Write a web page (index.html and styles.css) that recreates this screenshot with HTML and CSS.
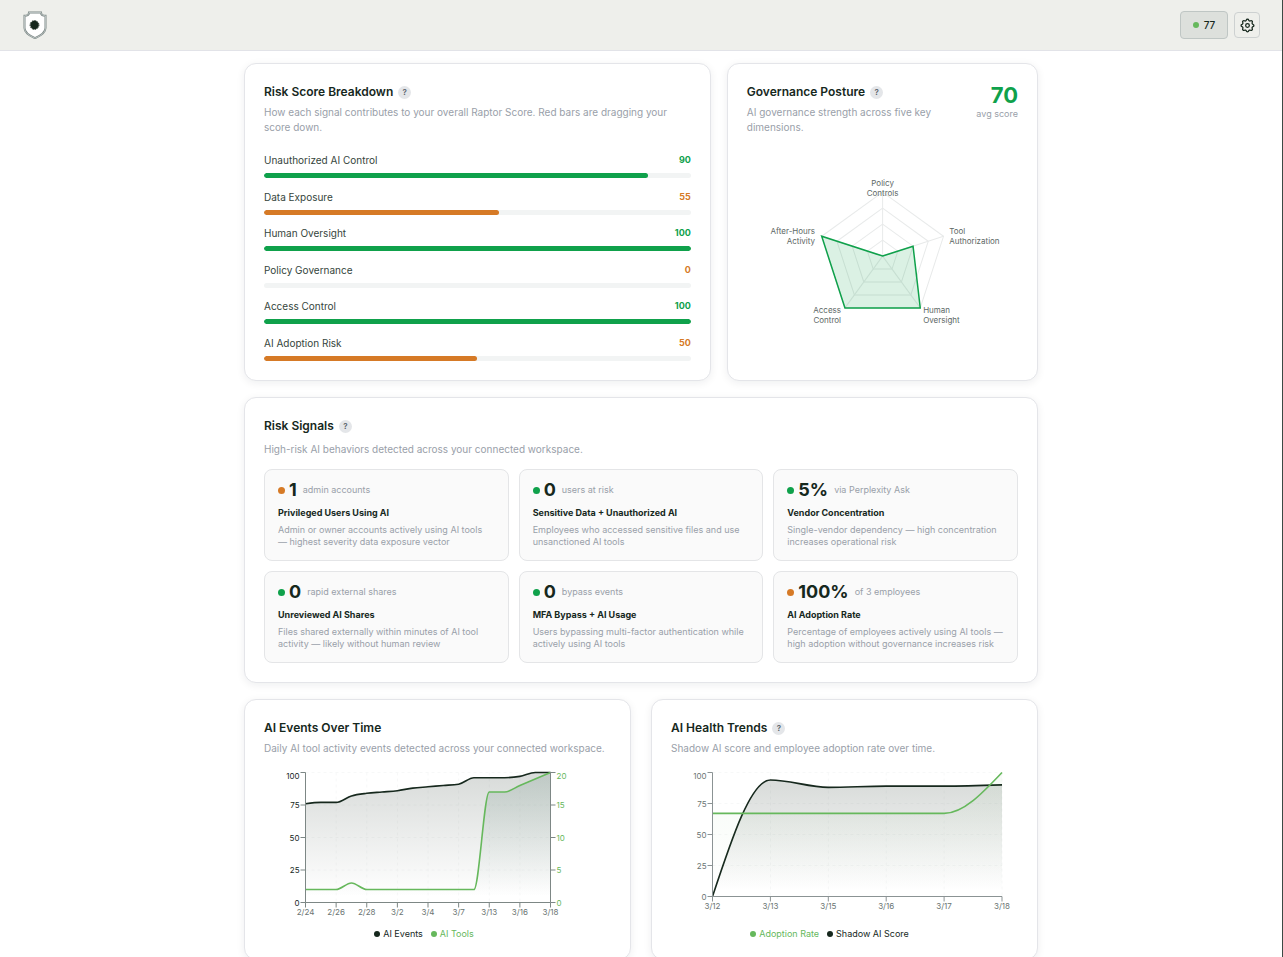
FILE: index.html
```html
<!DOCTYPE html>
<html lang="en">
<head>
    <meta charset="UTF-8">
    <meta name="viewport" content="width=device-width, initial-scale=1.0">
    <title>Raptor Score</title>
    <link rel="stylesheet" href="styles.css">
</head>
<body>

    <header class="topbar">
        <a href="#" class="logo" aria-label="Home">
            <svg width="24" height="28" viewBox="0 0 24 28">
                <path d="M6 1.5h12c0 2 1.800 3.300 4.500 3.300v12.200c0 4.500-4.500 7.500-10.500 10.200C6 24.500 1.500 21.500 1.500 17V4.800C4.200 4.800 6 3.500 6 1.500z" fill="#fff" stroke="#7f8a87" stroke-width="2"/>
                <path d="M6 1.500h12c0 2 1.800 3.300 4.500 3.300v12.200c0 4.500-4.500 7.500-10.500 10.200C6 24.500 1.500 21.500 1.500 17V4.800C4.200 4.800 6 3.500 6 1.500z" fill="none" stroke="#c3cbcb" stroke-width=".8"/>
                <circle cx="11.500" cy="14" r="4.200" fill="#16281d"/>
                <circle cx="11.500" cy="14" r="4.400" fill="none" stroke="#16281d" stroke-width="1" stroke-dasharray="1.500 1"/>
            </svg>
        </a>
        <div class="actions">
            <button class="score-btn"><span class="dot light"></span>77</button>
            <button class="gear-btn" aria-label="Settings">
                <svg width="17" height="17" viewBox="0 0 24 24" fill="none" stroke="#16281d" stroke-width="1.800" stroke-linejoin="round">
                    <path d="M10.300 4.300c.4-1.700 3-1.700 3.400 0a1.700 1.700 0 0 0 2.600 1.100c1.500-1 3.300.8 2.400 2.400a1.700 1.700 0 0 0 1 2.500c1.800.5 1.800 3 0 3.400a1.700 1.700 0 0 0-1 2.600c.9 1.500-.9 3.300-2.400 2.400a1.700 1.700 0 0 0-2.600 1c-.4 1.800-3 1.800-3.400 0a1.700 1.700 0 0 0-2.600-1c-1.500.9-3.300-.9-2.400-2.400a1.700 1.700 0 0 0-1-2.600c-1.800-.4-1.800-3 0-3.400a1.700 1.700 0 0 0 1-2.500c-.9-1.600.9-3.400 2.400-2.400a1.700 1.700 0 0 0 2.600-1.100z"/>
                    <circle cx="12" cy="12" r="2.600"/>
                </svg>
            </button>
        </div>
    </header>

    <main class="content">

        <div class="row top-row">
            <section class="card breakdown">
                <h2>Risk Score Breakdown <button class="help">?</button></h2>
                <p class="sub">How each signal contributes to your overall Raptor Score. Red bars are dragging your score down.</p>
                <ul class="bars">
                    <li><div class="bar-label"><span>Unauthorized AI Control</span><b class="good">90</b></div><div class="track"><div class="fill good-bg" style="width: 90%"></div></div></li>
                    <li><div class="bar-label"><span>Data Exposure</span><b class="warn">55</b></div><div class="track"><div class="fill warn-bg" style="width: 55%"></div></div></li>
                    <li><div class="bar-label"><span>Human Oversight</span><b class="good">100</b></div><div class="track"><div class="fill good-bg" style="width: 100%"></div></div></li>
                    <li><div class="bar-label"><span>Policy Governance</span><b class="warn">0</b></div><div class="track"><div class="fill warn-bg" style="width: 0%"></div></div></li>
                    <li><div class="bar-label"><span>Access Control</span><b class="good">100</b></div><div class="track"><div class="fill good-bg" style="width: 100%"></div></div></li>
                    <li><div class="bar-label"><span>AI Adoption Risk</span><b class="warn">50</b></div><div class="track"><div class="fill warn-bg" style="width: 50%"></div></div></li>
                </ul>
            </section>

            <section class="card">
                <div class="card-head">
                    <div>
                        <h2>Governance Posture <button class="help">?</button></h2>
                        <p class="sub">AI governance strength across five key dimensions.</p>
                    </div>
                    <div class="avg">
                        <strong>70</strong>
                        <span>avg score</span>
                    </div>
                </div>
                <svg class="chart" id="radar" viewBox="0 0 271 216"></svg>
            </section>
        </div>

        <section class="card signals">
            <h2>Risk Signals <button class="help">?</button></h2>
            <p class="sub">High-risk AI behaviors detected across your connected workspace.</p>
            <div class="tiles">
                <article class="tile">
                    <div class="stat"><span class="dot warn-bg"></span><strong>1</strong><span>admin accounts</span></div>
                    <h3>Privileged Users Using AI</h3>
                    <p>Admin or owner accounts actively using AI tools —&nbsp;highest severity data exposure vector</p>
                </article>
                <article class="tile">
                    <div class="stat"><span class="dot good-bg"></span><strong>0</strong><span>users at risk</span></div>
                    <h3>Sensitive Data + Unauthorized AI</h3>
                    <p>Employees who accessed sensitive files and use unsanctioned AI tools</p>
                </article>
                <article class="tile">
                    <div class="stat"><span class="dot good-bg"></span><strong>5%</strong><span>via Perplexity Ask</span></div>
                    <h3>Vendor Concentration</h3>
                    <p>Single-vendor dependency — high concentration increases operational risk</p>
                </article>
                <article class="tile">
                    <div class="stat"><span class="dot good-bg"></span><strong>0</strong><span>rapid external shares</span></div>
                    <h3>Unreviewed AI Shares</h3>
                    <p>Files shared externally within minutes of AI tool activity — likely without human review</p>
                </article>
                <article class="tile">
                    <div class="stat"><span class="dot good-bg"></span><strong>0</strong><span>bypass events</span></div>
                    <h3>MFA Bypass + AI Usage</h3>
                    <p>Users bypassing multi-factor authentication while actively using AI tools</p>
                </article>
                <article class="tile">
                    <div class="stat"><span class="dot warn-bg"></span><strong>100%</strong><span>of 3 employees</span></div>
                    <h3>AI Adoption Rate</h3>
                    <p>Percentage of employees actively using AI tools — high adoption without governance increases risk</p>
                </article>
            </div>
        </section>

        <div class="row chart-row">
            <section class="card">
                <h2>AI Events Over Time</h2>
                <p class="sub">Daily AI tool activity events detected across your connected workspace.</p>
                <svg class="chart" id="events" viewBox="0 0 347 160"></svg>
                <div class="legend events-legend">
                    <span><i class="dot dark"></i>AI Events</span>
                    <span class="green"><i class="dot light"></i>AI Tools</span>
                </div>
            </section>

            <section class="card">
                <h2>AI Health Trends <button class="help">?</button></h2>
                <p class="sub">Shadow AI score and employee adoption rate over time.</p>
                <svg class="chart" id="trends" viewBox="0 0 347 160"></svg>
                <div class="legend trends-legend">
                    <span class="green"><i class="dot light"></i>Adoption Rate</span>
                    <span><i class="dot dark"></i>Shadow AI Score</span>
                </div>
            </section>
        </div>

    </main>

    <script src="charts.js"></script>
</body>
</html>
```
FILE: styles.css
```css
* { box-sizing: border-box; margin: 0; padding: 0; }

body {
    font-family: Inter, "Liberation Sans", sans-serif;
    font-size: 10px;
    color: #16281d;
    background: #fff;
    min-height: 100vh;
    border-right: 1px solid #3c4944;
}

button { font-family: inherit; color: inherit; cursor: pointer; }
ul { list-style: none; }

/* top bar */
.topbar {
    display: flex;
    align-items: center;
    justify-content: space-between;
    height: 51px;
    padding: 0 22px 0 23px;
    background: #eeefeb;
    border-bottom: 1px solid #e2e3e8;
}

.logo svg { display: block; }
.actions { display: flex; align-items: center; gap: 6px; }

.score-btn {
    display: flex;
    align-items: center;
    justify-content: center;
    gap: 5px;
    width: 48px;
    height: 28px;
    background: #dde0dc;
    border: 1px solid #bfc6c4;
    border-radius: 4px;
    font-size: 10px;
    font-weight: 500;
}

.gear-btn {
    display: flex;
    align-items: center;
    justify-content: center;
    width: 26px;
    height: 26px;
    background: #eeefeb;
    border: 1px solid #cdd1d1;
    border-radius: 4px;
}

.dot { display: inline-block; flex: none; width: 6px; height: 6px; border-radius: 50%; }
.light { background: #66b85c; }
.dark { background: #16281d; }
.green { color: #66b85c; }

.good { color: #0fa14b; }
.warn { color: #d67a26; }
.good-bg { background: #0fa14b; }
.warn-bg { background: #d67a26; }

/* cards */
.content {
    display: flex;
    flex-direction: column;
    gap: 16px;
    max-width: 794px;
    margin: 0 auto;
    padding: 12px 0;
}

.row { display: grid; gap: 16px; }
.top-row { grid-template-columns: 3fr 2fr; }
.chart-row { grid-template-columns: 1fr 1fr; gap: 20px; }

.card {
    min-width: 0;
    padding: 19px;
    background: #fff;
    border: 1px solid #e4e5e9;
    border-radius: 12px;
    box-shadow: 0 2px 8px rgba(20, 30, 40, 0.07);
}

h2 {
    display: flex;
    align-items: center;
    gap: 5px;
    font-size: 12px;
    line-height: 18px;
    font-weight: 600;
}

.help {
    width: 13px;
    height: 13px;
    border: none;
    border-radius: 50%;
    background: #e4e6e9;
    color: #59636b;
    font-size: 8px;
    line-height: 13px;
    font-weight: 600;
}

.sub { margin-top: 4px; line-height: 15px; color: #99a0a9; }

.breakdown { display: flex; flex-direction: column; min-height: 318px; }
.bars {
    flex: 1;
    display: flex;
    flex-direction: column;
    justify-content: space-between;
    margin-top: 17px;
}
.bar-label { display: flex; justify-content: space-between; line-height: 16px; color: #35453c; }
.bar-label b { font-size: 9px; font-weight: 700; }
.track { height: 5px; margin-top: 5px; border-radius: 3px; background: #f2f4f4; overflow: hidden; }
.fill { height: 5px; border-radius: 3px; }

.card-head { display: flex; justify-content: space-between; gap: 24px; }
.avg { flex: none; text-align: right; color: #99a0a9; font-size: 9px; line-height: 14px; }
.avg strong { display: block; font-size: 22px; line-height: 24px; color: #0fa14b; }
.avg span { display: block; }

.chart { display: block; width: 100%; margin-top: 8px; font-size: 8px; overflow: visible; }

/* risk signals */
.signals .sub { margin-top: 7px; }
.tiles { display: grid; grid-template-columns: repeat(3, 1fr); gap: 10px; margin-top: 12px; }

.tile {
    padding: 10px 13px 12px;
    background: #fafafa;
    border: 1px solid #e4e5e7;
    border-radius: 8px;
    font-size: 9px;
    line-height: 12px;
    color: #99a0a9;
}
.stat { display: flex; align-items: center; height: 20px; }
.stat .dot { width: 7px; height: 7px; }
.stat strong { margin: 0 6px 0 4px; font-size: 18px; font-weight: 700; color: #16281d; }
.tile h3 { margin: 6px 0 5px; font-size: 9px; line-height: 13px; font-weight: 700; color: #16281d; }

/* charts */
.legend {
    display: flex;
    justify-content: center;
    gap: 8px;
    margin-top: 4px;
    font-size: 9px;
    line-height: 12px;
}
.legend span { display: flex; align-items: center; gap: 3px; }
.events-legend { padding-right: 27px; }
.trends-legend { padding-right: 30px; }
```
FILE: charts.js
```javascript
const DARK = "#16281d";
const GREEN = "#66b85c";

function add(parent, tag, attrs, text) {
    const el = document.createElementNS("http://www.w3.org/2000/svg", tag);
    for (const key in attrs) el.setAttribute(key, attrs[key]);
    if (text !== undefined) el.textContent = text;
    parent.appendChild(el);
    return el;
}

// monotone cubic through evenly spaced points
function curve(pts) {
    const n = pts.length;
    const slope = [];
    for (let i = 0; i < n - 1; i++) {
        slope.push((pts[i + 1][1] - pts[i][1]) / (pts[i + 1][0] - pts[i][0]));
    }
    const t = new Array(n);
    for (let i = 1; i < n - 1; i++) {
        const a = slope[i - 1], b = slope[i];
        t[i] = a * b <= 0 ? 0 : Math.sign(a) * Math.min(Math.abs(a), Math.abs(b), Math.abs(a + b) / 4) * 2;
    }
    t[0] = (3 * slope[0] - t[1]) / 2;
    t[n - 1] = (3 * slope[n - 2] - t[n - 2]) / 2;
    let d = `M${pts[0]}`;
    for (let i = 0; i < n - 1; i++) {
        const [x0, y0] = pts[i], [x1, y1] = pts[i + 1];
        const h = (x1 - x0) / 3;
        d += `C${x0 + h},${y0 + h * t[i]} ${x1 - h},${y1 - h * t[i + 1]} ${x1},${y1}`;
    }
    return d;
}

function gradient(svg, id, color, opacity) {
    const g = add(svg, "linearGradient", { id, x1: 0, y1: 0, x2: 0, y2: 1 });
    add(g, "stop", { offset: "5%", "stop-color": color, "stop-opacity": opacity });
    add(g, "stop", { offset: "95%", "stop-color": color, "stop-opacity": 0 });
}

function areaChart(id, box, dates, series, opts) {
    const svg = document.getElementById(id);
    const { left, right, top, bottom } = box;
    const step = (right - left) / (dates.length - 1);

    for (let i = 0; i <= 4; i++) {
        const y = bottom - (bottom - top) * i / 4;
        add(svg, "line", { x1: left, x2: right, y1: y, y2: y, stroke: "#f7f8f8", "stroke-dasharray": "3 3" });
    }
    dates.forEach((date, i) => {
        const x = left + step * i;
        add(svg, "line", { x1: x, x2: x, y1: top, y2: bottom, stroke: "#f7f8f8", "stroke-dasharray": "3 3" });
    });

    series.forEach((s, n) => {
        const dx = (right - left) / (s.data.length - 1);
        const pts = s.data.map((v, i) => [left + dx * i, bottom - (bottom - top) * v / s.max]);
        const d = curve(pts);
        gradient(svg, id + n, s.fill || s.color, s.opacity);
        add(svg, "path", { d: `${d}L${right},${bottom}L${left},${bottom}Z`, fill: `url(#${id + n})` });
        add(svg, "path", { d, fill: "none", stroke: s.color, "stroke-width": 1.6 });
    });

    add(svg, "path", { d: `M${left},${top}V${bottom}H${right}`, fill: "none", stroke: opts.axis });
    for (let i = 0; i <= 4; i++) {
        const y = bottom - (bottom - top) * i / 4;
        const ty = i === 4 ? y + 6 : y + 3;
        add(svg, "line", { x1: left - 5, x2: left, y1: y, y2: y, stroke: opts.axis });
        add(svg, "text", { x: left - 6, y: ty, "text-anchor": "end", fill: opts.label }, i * 25);
        if (opts.rightAxis) {
            add(svg, "line", { x1: right, x2: right + 5, y1: y, y2: y, stroke: opts.axis });
            add(svg, "text", { x: right + 6, y: ty, fill: GREEN }, i * 5);
        }
    }
    if (opts.rightAxis) add(svg, "line", { x1: right, x2: right, y1: top, y2: bottom, stroke: opts.axis });
    dates.forEach((date, i) => {
        const x = left + step * i;
        add(svg, "line", { x1: x, x2: x, y1: bottom, y2: bottom + 5, stroke: opts.axis });
        add(svg, "text", { x, y: bottom + 12, "text-anchor": "middle", fill: "#6b7573" }, date);
    });
}

areaChart("events", { left: 41.5, right: 286.5, top: 8.5, bottom: 138.5 },
    ["2/24", "2/26", "2/28", "3/2", "3/4", "3/7", "3/13", "3/16", "3/18"],
    [
        { color: DARK, opacity: 0.16, max: 100, data: [76, 77, 77, 82, 84, 85, 86, 88, 89, 90, 91, 96, 96, 96, 97, 100, 100] },
        { color: GREEN, fill: "#5f8578", opacity: 0.2, max: 20, data: [2, 2, 2, 3, 2, 2, 2, 2, 2, 2, 2, 2, 17, 17, 18, 19, 20] }
    ],
    { axis: "#7d8785", label: DARK, rightAxis: true });

areaChart("trends", { left: 41.5, right: 331, top: 8.5, bottom: 132.5 },
    ["3/12", "3/13", "3/15", "3/16", "3/17", "3/18"],
    [
        { color: DARK, opacity: 0.16, max: 100, data: [0, 94, 88, 89, 89, 90] },
        { color: GREEN, opacity: 0.05, max: 100, data: [67, 67, 67, 67, 67, 100] }
    ],
    { axis: "#8b9394", label: "#6b7573" });

function radarChart() {
    const svg = document.getElementById("radar");
    const cx = 135.5, cy = 113, r = 64;
    const at = (i, k) => {
        const a = (-90 + i * 72) * Math.PI / 180;
        return [cx + Math.cos(a) * r * k, cy + Math.sin(a) * r * k];
    };
    const ring = values => values.map((v, i) => at(i, v)).join(" ");

    [0.25, 0.5, 0.75, 1].forEach(k => {
        add(svg, "polygon", { points: ring([k, k, k, k, k]), fill: "none", stroke: "#e8eaea", "stroke-width": 1 });
    });
    for (let i = 0; i < 5; i++) {
        const [x, y] = at(i, 1);
        add(svg, "line", { x1: cx, y1: cy, x2: x, y2: y, stroke: "#e8eaea" });
    }
    add(svg, "polygon", { points: ring([0, 0.5, 1, 1, 1]), fill: "#0fa14b", "fill-opacity": 0.15, stroke: "#0fa14b", "stroke-width": 1.5 });

    const labels = [
        ["Policy", "Controls", 135.5, 43, "middle"],
        ["Tool", "Authorization", 202, 91, "start"],
        ["Human", "Oversight", 176, 170, "start"],
        ["Access", "Control", 94, 170, "end"],
        ["After-Hours", "Activity", 68, 91, "end"]
    ];
    labels.forEach(([a, b, x, y, anchor]) => {
        add(svg, "text", { x, y, "text-anchor": anchor, fill: "#5d6865" }, a);
        add(svg, "text", { x, y: y + 10, "text-anchor": anchor, fill: "#5d6865" }, b);
    });
}
radarChart();
```
